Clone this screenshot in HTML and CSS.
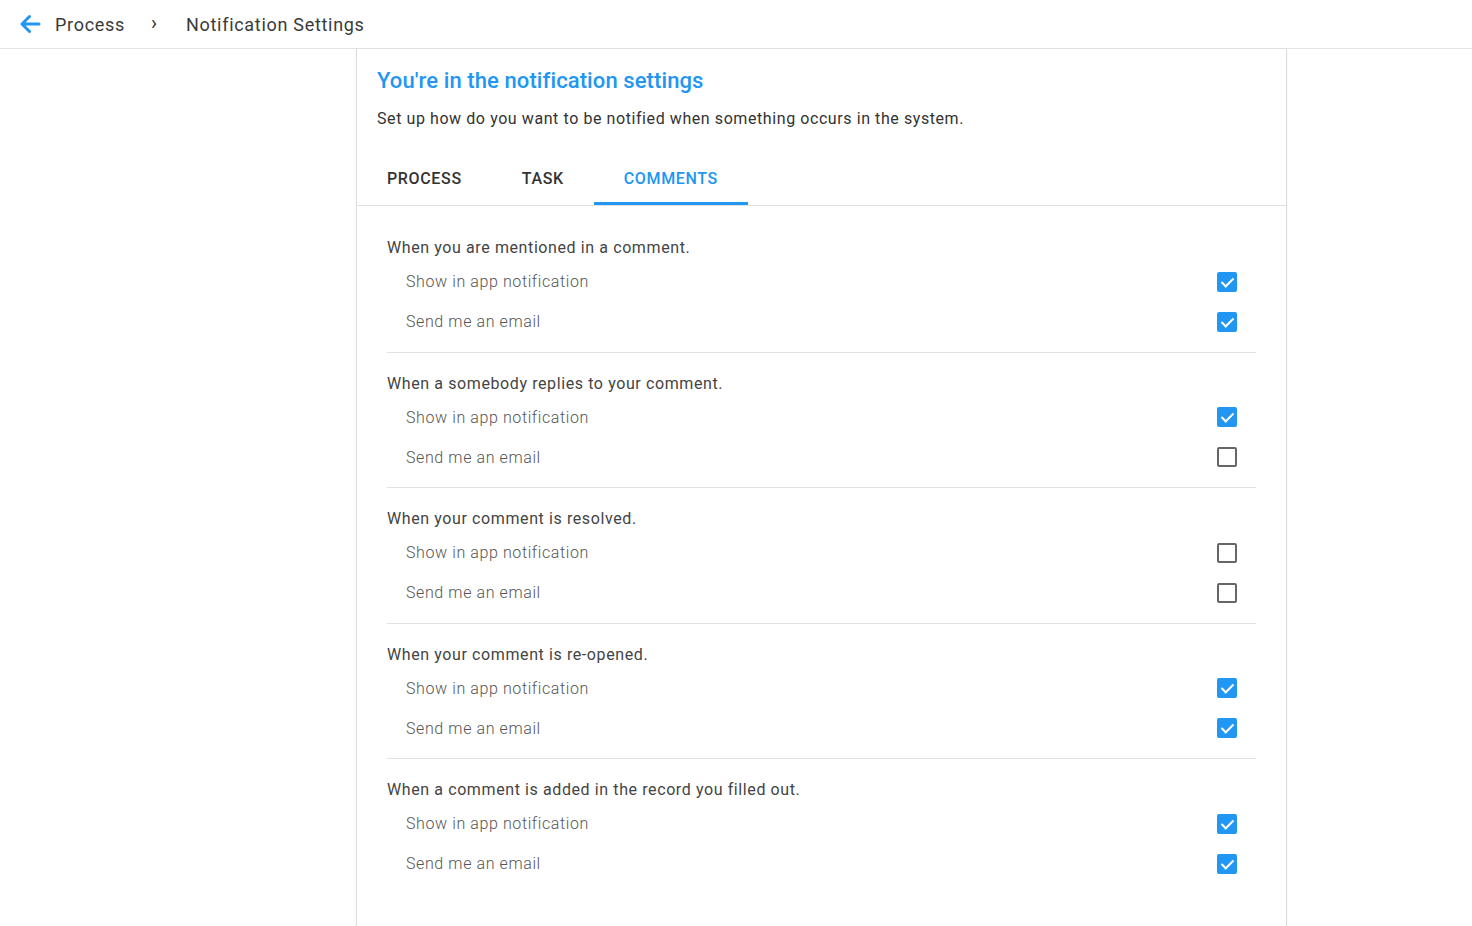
FILE: index.html
```html
<!DOCTYPE html>
<html>
<head>
<meta charset="utf-8">
<link rel="stylesheet" href="styles.css">
</head>
<body>
<header class="topbar">
  <svg class="back" viewBox="0 0 22 20" width="22" height="20"><path d="M3 10H20M10.5 2.5L3 10l7.5 7.5" fill="none" stroke="#2196f3" stroke-width="3" stroke-linecap="round" stroke-linejoin="round"/></svg>
  <span class="crumb">Process</span>
  <span class="sep">›</span>
  <span class="crumb">Notification Settings</span>
</header>
<main class="page">
  <section class="card">
    <div class="intro">
      <h1 class="title">You're in the notification settings</h1>
      <p class="subtitle">Set up how do you want to be notified when something occurs in the system.</p>
    </div>
    <nav class="tabs">
      <div class="tab">PROCESS</div>
      <div class="tab">TASK</div>
      <div class="tab active">COMMENTS</div>
    </nav>
    <div class="groups">
      <div class="group">
        <div class="group-title">When you are mentioned in a comment.</div>
        <div class="option"><span>Show in app notification</span><span class="cb on"></span></div>
        <div class="option"><span>Send me an email</span><span class="cb on"></span></div>
      </div>
      <div class="group">
        <div class="group-title">When a somebody replies to your comment.</div>
        <div class="option"><span>Show in app notification</span><span class="cb on"></span></div>
        <div class="option"><span>Send me an email</span><span class="cb"></span></div>
      </div>
      <div class="group">
        <div class="group-title">When your comment is resolved.</div>
        <div class="option"><span>Show in app notification</span><span class="cb"></span></div>
        <div class="option"><span>Send me an email</span><span class="cb"></span></div>
      </div>
      <div class="group">
        <div class="group-title">When your comment is re-opened.</div>
        <div class="option"><span>Show in app notification</span><span class="cb on"></span></div>
        <div class="option"><span>Send me an email</span><span class="cb on"></span></div>
      </div>
      <div class="group last">
        <div class="group-title">When a comment is added in the record you filled out.</div>
        <div class="option"><span>Show in app notification</span><span class="cb on"></span></div>
        <div class="option"><span>Send me an email</span><span class="cb on"></span></div>
      </div>
    </div>
  </section>
</main>
</body>
</html>
```
FILE: styles.css
```css
* { box-sizing: border-box; }
html, body { margin: 0; padding: 0; background: #fff; }
body {
  font-family: Roboto, "Liberation Sans", sans-serif;
  color: #333;
  height: 926px;
  overflow: hidden;
  display: flex;
  flex-direction: column;
}
.topbar {
  height: 49px;
  flex: none;
  display: flex;
  align-items: center;
  padding-left: 19px;
  border-bottom: 1px solid #e4e4e4;
}
.back { width: 22px; height: 20px; margin-right: 14px; }
.crumb { font-size: 18px; color: #3a3a3a; letter-spacing: 0.7px; }
.sep { font-size: 20px; color: #333; margin: 0 29px 0 26px; position: relative; top: -1px; }
.page {
  flex: 1;
  display: flex;
  padding-left: 356px;
}
.card {
  width: 931px;
  border-left: 1px solid #dcdcdc;
  border-right: 1px solid #dcdcdc;
  box-shadow: 0 0 2px rgba(0,0,0,0.06);
}
.intro { padding: 18px 20px 0 20px; }
.title {
  margin: 0;
  font-size: 22px;
  font-weight: 500;
  color: #2196f3;
  line-height: 28px;
  letter-spacing: 0.1px;
}
.subtitle {
  margin: 14px 0 0 0;
  font-size: 16px;
  line-height: 20px;
  color: #333;
  letter-spacing: 0.58px;
}
.tabs {
  display: flex;
  margin-top: 22px;
  border-bottom: 1px solid #e0e0e0;
}
.tab {
  padding: 18px 30px 13px 30px;
  font-size: 16px;
  font-weight: 500;
  color: #333;
  line-height: 20px;
  letter-spacing: 0.65px;
  border-bottom: 3px solid transparent;
}
.tab.active { color: #2196f3; border-bottom-color: #2196f3; }
.groups { padding: 32px 30px 0 30px; }
.group {
  border-bottom: 1px solid #e2e2e2;
  padding-bottom: 10px;
  margin-bottom: 21px;
}
.group.last { border-bottom: none; }
.group-title {
  font-size: 16px;
  line-height: 20px;
  color: #444;
  letter-spacing: 0.6px;
  margin-bottom: 3.5px;
}
.option {
  display: flex;
  justify-content: space-between;
  align-items: center;
  height: 40px;
  padding-left: 19px;
  padding-right: 19px;
  font-size: 16px;
  font-weight: 300;
  color: #555;
  letter-spacing: 0.6px;
}
.cb {
  width: 20px;
  height: 20px;
  border: 2px solid #666;
  border-radius: 2px;
  position: relative;
}
.cb.on {
  background: #2196f3;
  border-color: #2196f3;
}
.cb.on::after {
  content: "";
  position: absolute;
  left: 5px;
  top: 1px;
  width: 5px;
  height: 10px;
  border-right: 2px solid #fff;
  border-bottom: 2px solid #fff;
  transform: rotate(45deg);
}
```
